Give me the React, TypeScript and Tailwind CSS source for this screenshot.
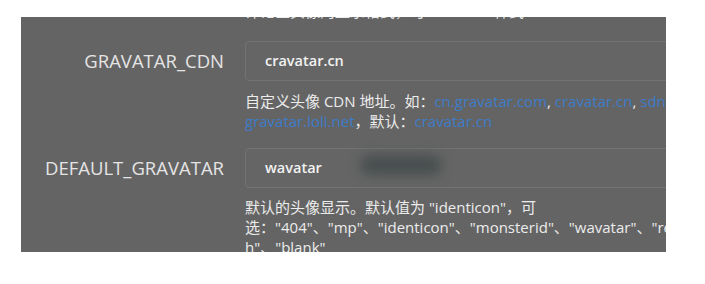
export default function App() {
  const font = { fontFamily: '"Open Sans", "Noto Sans CJK SC", sans-serif' };
  const link = 'text-[#3d7cc9]';

  return (
    <div className="h-[284px] w-[705px] bg-white pt-[17px] pl-[21px]" style={font}>
      <div className="h-[235px] w-[645px] overflow-hidden bg-[#646464]">
        <div className="-mt-[16px] grid grid-cols-[203px_505px] gap-x-[21px]">
          {/* tail of the previous field's help text */}
          <div />
          <p className="whitespace-nowrap text-[15px] leading-[20px] text-[#ececec]">
            评论区头像的显示格式，可 "default" 样式
          </p>

          {/* GRAVATAR_CDN */}
          <label className="mt-[20px] flex h-[40px] items-center justify-end text-[18.5px] text-[#e4e4e4]">
            GRAVATAR_CDN
          </label>
          <div className="mt-[20px]">
            <div className="flex h-[40px] items-center rounded-[4px] border border-[#737373] bg-[#656565] px-[19px] text-[14.5px] font-semibold text-[#f2f2f2]">
              cravatar.cn
            </div>
            <div className="mt-[10px] text-[15px] leading-[20px] text-[#ececec]">
              <p className="whitespace-nowrap">
                自定义头像 CDN 地址。如：<span className={link}>cn.gravatar.com</span>, <span className={link}>cravatar.cn</span>, <span className={link}>sdn.geekzu.org</span>,
              </p>
              <p className="whitespace-nowrap">
                <span className={link}>gravatar.loli.net</span>，默认：<span className={link}>cravatar.cn</span>
              </p>
            </div>
          </div>

          {/* DEFAULT_GRAVATAR */}
          <label className="mt-[17px] flex h-[40px] items-center justify-end text-[18.5px] text-[#e4e4e4]">
            DEFAULT_GRAVATAR
          </label>
          <div className="mt-[17px]">
            <div className="relative flex h-[40px] items-center rounded-[4px] border border-[#737373] bg-[#656565] px-[19px] text-[14.5px] font-semibold text-[#f2f2f2]">
              wavatar
              <div className="absolute left-[114px] top-[6px] h-[20px] w-[82px] rounded-full bg-[#484e4f] blur-[6px]" />
            </div>
            <div className="mt-[9px] text-[15px] leading-[20px] text-[#ececec]">
              <p className="whitespace-nowrap">默认的头像显示。默认值为 "identicon"，可</p>
              <p className="whitespace-nowrap">
                选："404"、"mp"、"identicon"、"monsterid"、"wavatar"、"retro"、"robohas
              </p>
              <p className="whitespace-nowrap">h"、"blank"</p>
            </div>
          </div>
        </div>
      </div>
    </div>
  );
}
